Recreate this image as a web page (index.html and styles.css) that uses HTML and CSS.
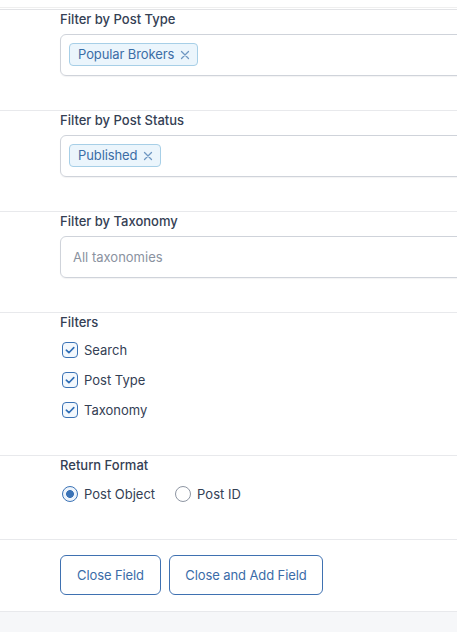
FILE: index.html
```html
<!DOCTYPE html>
<html>
<head>
<meta charset="utf-8">
<link rel="stylesheet" href="styles.css">
</head>
<body>
<div class="top"></div>
<div class="fields">
  <div class="field">
    <div class="label">Filter by Post Type</div>
    <div class="select">
      <span class="pill">Popular Brokers <svg class="x" viewBox="0 0 10 10" width="10" height="10"><path d="M1.5 1.5 L8.5 8.5 M8.5 1.5 L1.5 8.5" stroke="#6f97c2" stroke-width="1.3" stroke-linecap="round"/></svg></span>
    </div>
  </div>
  <div class="field">
    <div class="label">Filter by Post Status</div>
    <div class="select">
      <span class="pill">Published <svg class="x" viewBox="0 0 10 10" width="10" height="10"><path d="M1.5 1.5 L8.5 8.5 M8.5 1.5 L1.5 8.5" stroke="#6f97c2" stroke-width="1.3" stroke-linecap="round"/></svg></span>
    </div>
  </div>
  <div class="field">
    <div class="label">Filter by Taxonomy</div>
    <div class="select">
      <span class="placeholder">All taxonomies</span>
    </div>
  </div>
  <div class="field list-field">
    <div class="label">Filters</div>
    <ul class="checks">
      <li><span class="cb"><svg viewBox="0 0 16 16" width="16" height="16"><path d="M4.3 8.2 L6.9 10.7 L11.8 5.6" fill="none" stroke="#2f6db5" stroke-width="1.6" stroke-linecap="round" stroke-linejoin="round"/></svg></span>Search</li>
      <li><span class="cb"><svg viewBox="0 0 16 16" width="16" height="16"><path d="M4.3 8.2 L6.9 10.7 L11.8 5.6" fill="none" stroke="#2f6db5" stroke-width="1.6" stroke-linecap="round" stroke-linejoin="round"/></svg></span>Post Type</li>
      <li><span class="cb"><svg viewBox="0 0 16 16" width="16" height="16"><path d="M4.3 8.2 L6.9 10.7 L11.8 5.6" fill="none" stroke="#2f6db5" stroke-width="1.6" stroke-linecap="round" stroke-linejoin="round"/></svg></span>Taxonomy</li>
    </ul>
  </div>
  <div class="field list-field">
    <div class="label">Return Format</div>
    <div class="radios">
      <span class="radio-opt"><span class="rb on"></span>Post Object</span>
      <span class="radio-opt"><span class="rb"></span>Post ID</span>
    </div>
  </div>
  <div class="field buttons">
    <button class="btn btn-close">Close Field</button>
    <button class="btn btn-add">Close and Add Field</button>
  </div>
</div>
<div class="footer"></div>
</body>
</html>
```

FILE: styles.css
```css
html, body {
  margin: 0;
  padding: 0;
  overflow: hidden;
  background: #fff;
}
body {
  font-family: Inter, "Noto Sans", sans-serif;
  font-size: 13px;
  color: #344054;
  height: 632px;
  display: flex;
  flex-direction: column;
}
.top {
  height: 7px;
  border-bottom: 1px solid #efefef;
}
.fields {
  margin-top: 1px;
  border-top: 1px solid #e2e3e6;
}
.field {
  padding: 1px 0 34px 60px;
  border-bottom: 1px solid #e8e9ec;
  overflow: hidden;
}
.label {
  height: 16px;
  line-height: 16px;
  font-weight: 500;
  color: #344054;
  margin-bottom: 7px;
}
.select {
  height: 42px;
  box-sizing: border-box;
  margin-right: -40px;
  border: 1px solid #cfd3da;
  border-radius: 6px;
  padding: 8px;
  display: flex;
  align-items: flex-start;
  box-shadow: 0 1px 1px rgba(16, 24, 40, 0.05);
}
.pill {
  height: 23px;
  box-sizing: border-box;
  display: inline-flex;
  align-items: center;
  padding: 0 7px 0 8px;
  background: #ebf5fc;
  border: 1px solid #a7cfe7;
  border-radius: 4px;
  color: #3b6da6;
  line-height: 21px;
  letter-spacing: -0.1px;
}
.pill .x {
  margin-left: 6px;
  display: block;
}
.placeholder {
  color: #8a92a0;
  line-height: 24px;
  padding-left: 4px;
}
.list-field {
  padding-bottom: 30px;
}
.list-field .label {
  margin-bottom: 5px;
}
.checks {
  list-style: none;
  margin: 0;
  padding: 0;
}
.checks li {
  height: 30px;
  display: flex;
  align-items: center;
  padding-left: 2px;
}
.cb {
  width: 16px;
  height: 16px;
  box-sizing: border-box;
  border: 1px solid #3b73b6;
  border-radius: 4px;
  background: #f3f8fd;
  margin-right: 6px;
  display: flex;
  align-items: center;
  justify-content: center;
}
.cb svg {
  display: block;
  flex: none;
}
.radios {
  margin-top: 6px;
  height: 30px;
  display: flex;
  align-items: center;
  padding-left: 2px;
  gap: 20px;
}
.radio-opt {
  display: flex;
  align-items: center;
}
.rb {
  width: 16px;
  height: 16px;
  box-sizing: border-box;
  border: 1px solid #8e96a3;
  border-radius: 50%;
  margin-right: 6px;
  background: #fff;
}
.rb.on {
  border-color: #3b73b6;
  background: radial-gradient(circle, #3b73b6 0, #3b73b6 3.6px, #eef4fb 4.2px);
}
.buttons {
  padding: 15px 0 16px 60px;
  display: flex;
  gap: 8px;
}
.btn {
  height: 40px;
  padding: 0;
  font-family: inherit;
  font-size: 13px;
  color: #3b6ca8;
  background: #fff;
  border: 1px solid #3f71b1;
  border-radius: 6px;
  letter-spacing: -0.1px;
}
.btn-close {
  width: 101px;
}
.btn-add {
  width: 154px;
}
.footer {
  flex: 1;
  background: #f6f7f9;
}
```
